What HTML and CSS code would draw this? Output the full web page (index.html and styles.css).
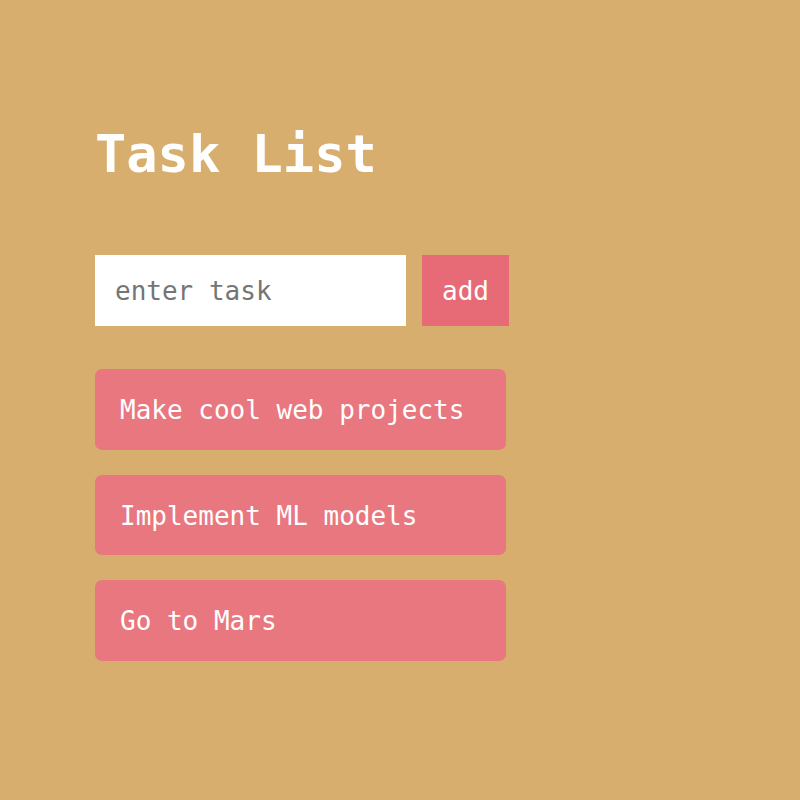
FILE: index.html
```html
<!DOCTYPE html>
<html lang="en">
<head>
<meta charset="utf-8">
<title>Task List</title>
<link rel="stylesheet" href="styles.css">
</head>
<body>
<main class="app">
  <h1 class="title">Task List</h1>
  <form class="task-form">
    <input class="task-input" type="text" placeholder="enter task">
    <button class="add-btn" type="button">add</button>
  </form>
  <ul class="tasks">
    <li class="task">Make cool web projects</li>
    <li class="task">Implement ML models</li>
    <li class="task">Go to Mars</li>
  </ul>
</main>
</body>
</html>
```

FILE: styles.css
```css
html, body {
  margin: 0;
  padding: 0;
  background: #d8ae6f;
  height: 100%;
}

body {
  font-family: "DejaVu Sans Mono", "Liberation Mono", monospace;
}

.app {
  padding: 124px 0 0 95px;
  display: flex;
  flex-direction: column;
}

.title {
  margin: 0;
  font-size: 52px;
  line-height: 60px;
  font-weight: bold;
  color: #ffffff;
}

.task-form {
  display: flex;
  gap: 16px;
  margin: 71px 0 0 0;
}

.task-input {
  box-sizing: border-box;
  width: 311px;
  height: 71px;
  border: none;
  outline: none;
  padding: 0 20px;
  font-family: inherit;
  font-size: 26px;
  color: #333;
  background: #ffffff;
}

.task-input::placeholder {
  color: #757575;
}

.add-btn {
  box-sizing: border-box;
  width: 87px;
  height: 71px;
  border: none;
  padding: 0;
  font-family: inherit;
  font-size: 26px;
  color: #ffffff;
  background: #e66b76;
}

.tasks {
  list-style: none;
  margin: 43px 0 0 0;
  padding: 0;
  display: flex;
  flex-direction: column;
  gap: 25px;
}

.task {
  box-sizing: border-box;
  width: 411px;
  height: 80.5px;
  display: flex;
  align-items: center;
  padding: 2px 25px 0 25px;
  border-radius: 7px;
  background: #e9777f;
  color: #ffffff;
  font-size: 26px;
}
```
